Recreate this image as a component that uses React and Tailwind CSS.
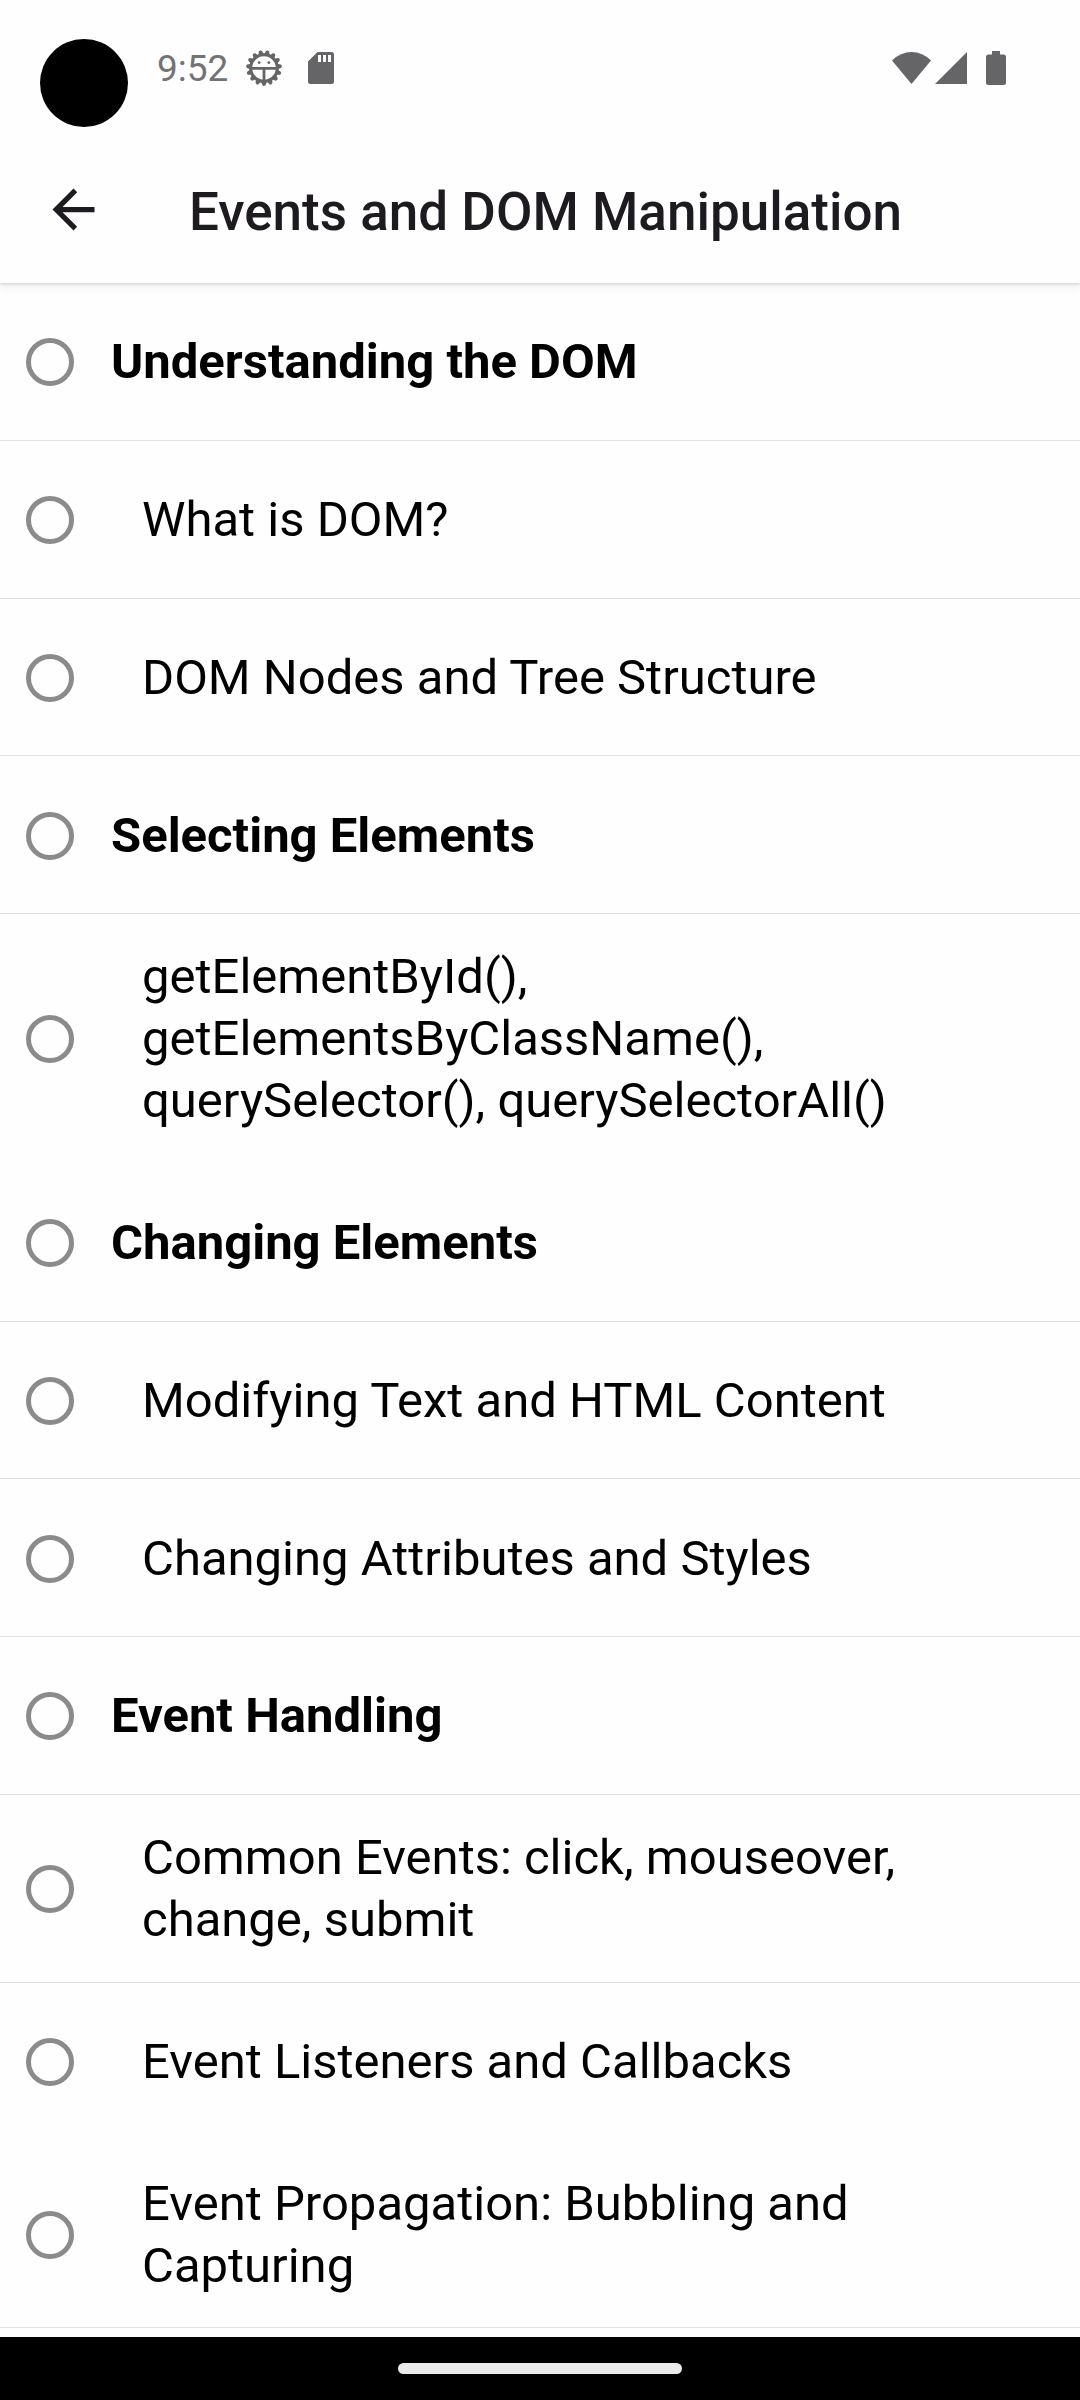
import React from "react";

const topics = [
  { title: "Understanding the DOM", heading: true, divider: true },
  { title: "What is DOM?", divider: true },
  { title: "DOM Nodes and Tree Structure", divider: true },
  { title: "Selecting Elements", heading: true, divider: true },
  {
    title: "getElementById(), getElementsByClassName(), querySelector(), querySelectorAll()",
    divider: false,
  },
  { title: "Changing Elements", heading: true, divider: true },
  { title: "Modifying Text and HTML Content", divider: true },
  { title: "Changing Attributes and Styles", divider: true },
  { title: "Event Handling", heading: true, divider: true },
  { title: "Common Events: click, mouseover, change, submit", divider: true },
  { title: "Event Listeners and Callbacks", divider: false },
  { title: "Event Propagation: Bubbling and Capturing", divider: true },
];

const teeth = Array.from({ length: 15 }, (_, i) => i * 24 + 12);

function DebugIcon() {
  return (
    <svg className="ml-[18px] h-9 w-9" viewBox="0 0 36 36" aria-hidden="true">
      <g fill="#656467">
        {teeth.map((angle) => (
          <path key={angle} d="M15 5 16.4 0.9Q18 -0.8 19.6 0.9L21 5Z" transform={`rotate(${angle} 18 18)`} />
        ))}
      </g>
      <circle cx="18" cy="18" r="13.3" fill="none" stroke="#656467" strokeWidth="3" />
      <path d="M5 18.3H31M18 18.3V31" stroke="#656467" strokeWidth="2.8" fill="none" />
      <circle cx="13.2" cy="12.6" r="1.4" fill="#656467" />
      <circle cx="22.8" cy="12.6" r="1.4" fill="#656467" />
    </svg>
  );
}

function SdCardIcon() {
  return (
    <svg className="ml-[26px] h-8 w-[26px]" viewBox="0 0 26 32" aria-hidden="true">
      <path
        fill="#656467"
        fillRule="evenodd"
        d="M9.5 0H23.5a2.5 2.5 0 0 1 2.5 2.5V29.5a2.5 2.5 0 0 1-2.5 2.5H2.5a2.5 2.5 0 0 1-2.5-2.5V9.5ZM10 3V10H13V3ZM15 3V10H18V3ZM20 3V10H23V3Z"
      />
    </svg>
  );
}

function StatusBar() {
  return (
    <div className="relative flex h-[136px] items-center pl-[157px] pr-[74px]">
      <div className="absolute left-10 top-[39px] h-[88px] w-[88px] rounded-full bg-black" />
      <span className="pt-0.5 text-[37px] leading-10 text-[#737275]">9:52</span>
      <DebugIcon />
      <SdCardIcon />
      <div className="ml-auto flex items-center">
        <svg className="h-8 w-[39px]" viewBox="0 0 39 32" aria-hidden="true">
          <path fill="#656467" d="M19.5 32 0 8.5Q8.5 0 19.5 0T39 8.5Z" />
        </svg>
        <svg className="ml-1 h-8 w-8" viewBox="0 0 32 32" aria-hidden="true">
          <path fill="#656467" d="M0 32 32 0V32Z" />
        </svg>
        <svg className="ml-[19px] h-[34px] w-5" viewBox="0 0 20 34" aria-hidden="true">
          <path
            fill="#656467"
            d="M6 0H14V3.5H17.5A2.5 2.5 0 0 1 20 6V31.5A2.5 2.5 0 0 1 17.5 34H2.5A2.5 2.5 0 0 1 0 31.5V6A2.5 2.5 0 0 1 2.5 3.5H6Z"
          />
        </svg>
      </div>
    </div>
  );
}

function TopicRow({ title, heading, divider }) {
  return (
    <li className={`flex grow border-b ${divider ? "border-[#e1e1e2]" : "border-transparent"}`}>
      <label
        className={`flex min-h-[156px] w-full items-center pb-[30px] pl-[26px] pr-[142px] pt-8 ${heading ? "gap-[37px]" : "gap-[68px]"}`}
      >
        <input
          type="checkbox"
          className="h-12 w-12 shrink-0 appearance-none rounded-full border-[5px] border-[#8b8a8d] checked:bg-[#8b8a8d]"
        />
        <span className={`text-[49px] leading-[62px] text-black ${heading ? "font-bold" : "font-normal"}`}>{title}</span>
      </label>
    </li>
  );
}

export default function App() {
  return (
    <div className="flex min-h-screen flex-col bg-[#fefefe] font-['Roboto',sans-serif]">
      <header className="relative bg-[#fefefe] shadow-[0_1px_3px_rgba(0,0,0,0.16),0_4px_9px_rgba(40,30,60,0.06)]">
        <StatusBar />
        <div className="flex h-[147px] items-center">
          <button type="button" aria-label="Back" className="ml-[42px]">
            <svg className="h-[63px] w-[63px]" viewBox="0 0 24 24" aria-hidden="true">
              <path fill="#1d1b20" d="M20 11H7.83l5.59-5.59L12 4l-8 8 8 8 1.41-1.41L7.83 13H20v-2z" />
            </svg>
          </button>
          <h1 className="ml-[84px] pt-1 text-[53px] font-medium leading-[64px] text-[#1d1b20]">
            Events and DOM Manipulation
          </h1>
        </div>
      </header>
      <main className="flex grow flex-col pb-[9px]">
        <ul className="flex grow flex-col">
          {topics.map((topic) => (
            <TopicRow key={topic.title} {...topic} />
          ))}
        </ul>
      </main>
      <footer className="flex h-[63px] items-center justify-center bg-black">
        <div className="h-[11px] w-[284px] rounded-full bg-[#eceaed]" />
      </footer>
    </div>
  );
}
